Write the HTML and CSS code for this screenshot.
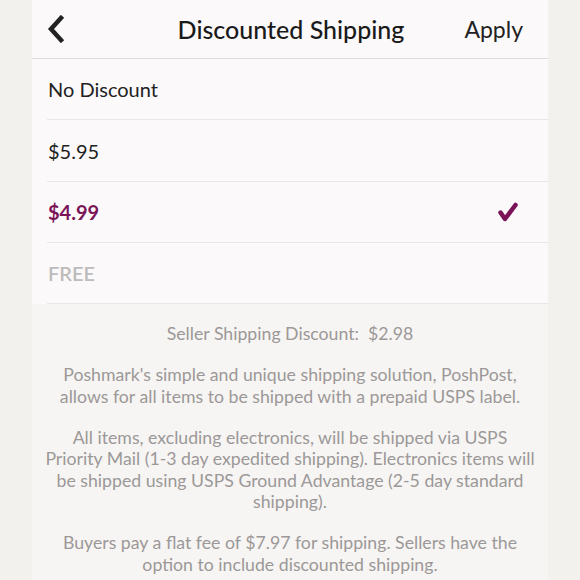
FILE: index.html
```html
<!DOCTYPE html>
<html lang="en">
<head>
  <meta charset="UTF-8" />
  <meta name="viewport" content="width=device-width, initial-scale=1.0"/>
  <title>Discounted Shipping</title>
  <link rel="stylesheet" href="styles.css">
</head>
<body>
  <div class="sheet">
    <header class="top-bar">
      <button class="back-btn" aria-label="Back">
        <svg width="20" height="28" viewBox="0 0 20 28">
          <path d="M15 3 L5 14 L15 25" fill="none" stroke="#222" stroke-width="4.5" stroke-linecap="square" stroke-linejoin="miter"/>
        </svg>
      </button>
      <h1>Discounted Shipping</h1>
      <button class="apply-btn">Apply</button>
    </header>

    <ul class="options">
      <li class="option">No Discount</li>
      <li class="option">$5.95</li>
      <li class="option selected">
        <span>$4.99</span>
        <svg width="22" height="20" viewBox="0 0 22 20">
          <path d="M4.5 10.5 L9 17 L19.5 3" fill="none" stroke="#7a1457" stroke-width="4.5" stroke-linecap="round" stroke-linejoin="round"/>
        </svg>
      </li>
      <li class="option disabled">FREE</li>
    </ul>

    <div class="info">
      <p>Seller Shipping Discount:&nbsp; $2.98</p>
      <p>Poshmark's simple and unique shipping solution, PoshPost, allows for all items to be shipped with a prepaid USPS label.</p>
      <p>All items, excluding electronics, will be shipped via USPS Priority Mail (1-3 day expedited shipping). Electronics items will be shipped using USPS Ground Advantage (2-5 day standard shipping).</p>
      <p>Buyers pay a flat fee of $7.97 for shipping. Sellers have the option to include discounted shipping.</p>
    </div>
  </div>
</body>
</html>
```

FILE: styles.css
```css
* {
  box-sizing: border-box;
  margin: 0;
  padding: 0;
}

body {
  font-family: Lato, 'Open Sans', sans-serif;
  background: #f2f1ee;
  color: #222;
  min-height: 100vh;
}

.sheet {
  width: 516px;
  margin: 0 auto;
  min-height: 580px;
  background: #f6f5f3;
}

.top-bar {
  height: 59px;
  display: flex;
  align-items: center;
  justify-content: space-between;
  padding: 0 25px 0 14px;
  background: #fcf9fa;
  border-bottom: 1px solid #dedbdc;
}

.back-btn,
.apply-btn {
  background: none;
  border: none;
  font-family: inherit;
  color: #222;
  cursor: pointer;
}

.back-btn {
  display: flex;
  width: 73px;
}

.top-bar h1 {
  font-size: 25px;
  font-weight: 500;
  color: #1a1a1a;
}

.apply-btn {
  font-size: 23px;
  width: 60px;
  text-align: right;
}

.options {
  list-style: none;
  background: #fcf9fa;
}

.option {
  height: 61px;
  margin-left: 15px;
  padding: 0 30px 0 1px;
  display: flex;
  align-items: center;
  justify-content: space-between;
  font-size: 20px;
  border-bottom: 1px solid #e9e6e7;
}

.option:nth-child(2) {
  height: 62px;
}

.option.selected {
  color: #7a1457;
  font-weight: 700;
}

.option.disabled {
  color: #bdbbbb;
  font-weight: 600;
}

.info {
  padding: 19px 11px 0;
  text-align: center;
  font-size: 17.7px;
  line-height: 21.5px;
  color: #9c9898;
}

.info p + p {
  margin-top: 19.5px;
}
```
